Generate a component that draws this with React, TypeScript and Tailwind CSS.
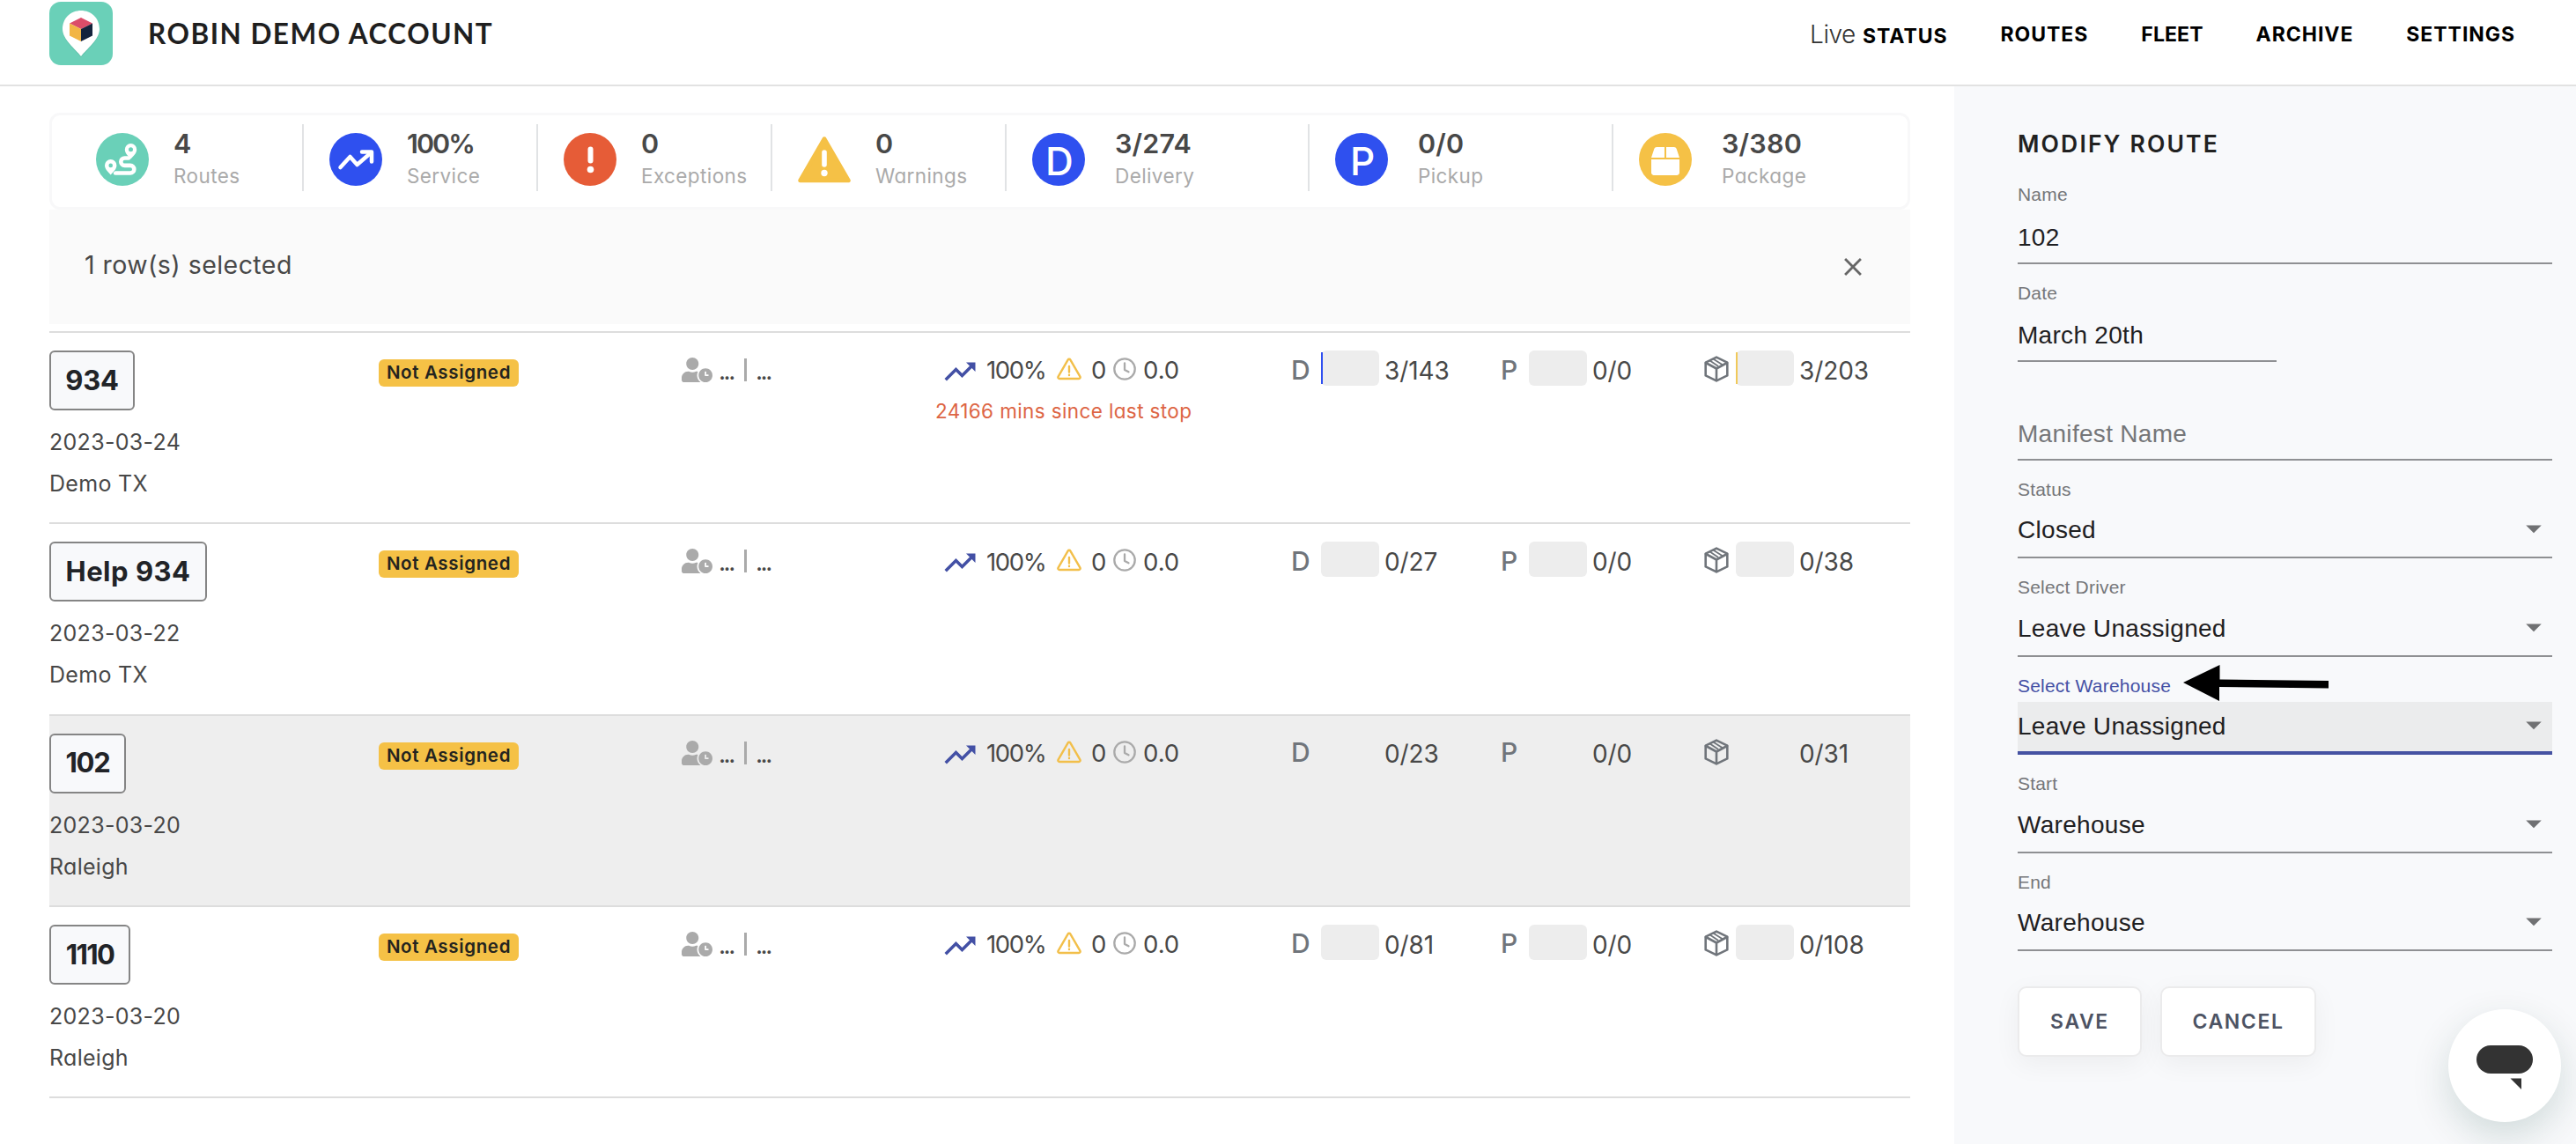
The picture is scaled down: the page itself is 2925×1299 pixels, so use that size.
import { ReactNode } from "react";
import { FaBox, FaUserClock } from "react-icons/fa";
import { MdArrowDropDown, MdClose, MdTrendingUp } from "react-icons/md";

type Route = {
    name: string;
    badge: string;
    date: string;
    depot: string;
    delivery: string;
    pickup: string;
    packages: string;
    selected?: boolean;
    started?: boolean;
    alert?: string;
}

const routes: Route[] = [
    { name: "934", badge: "w-[97px] tracking-[-0.2px]", date: "2023-03-24", depot: "Demo TX", delivery: "3/143", pickup: "0/0", packages: "3/203", started: true, alert: "24166 mins since last stop" },
    { name: "Help 934", badge: "w-[179px] tracking-[0.5px]", date: "2023-03-22", depot: "Demo TX", delivery: "0/27", pickup: "0/0", packages: "0/38" },
    { name: "102", badge: "w-[87px] tracking-[-1.2px]", date: "2023-03-20", depot: "Raleigh", delivery: "0/23", pickup: "0/0", packages: "0/31", selected: true },
    { name: "1110", badge: "w-[92px] tracking-[-1.6px]", date: "2023-03-20", depot: "Raleigh", delivery: "0/81", pickup: "0/0", packages: "0/108" },
];

const Logo = () => (
    <svg className="size-[72px]" viewBox="0 0 72 72">
        <rect width="72" height="72" rx="13" fill="#6ad0b8" />
        <path d="M36 63C30 55 15 44 15 31.500C15 19 24.500 10.500 36 10.500S57 19 57 31.500C57 44 42 55 36 63z" fill="#3f9f89" opacity=".45" />
        <path d="M36 62C30 54 15 43 15 31C15 18.500 24.500 10 36 10S57 18.500 57 31C57 43 42 54 36 62z" fill="#fff" />
        <path d="M36 18l13 6.500-13 6.500-13-6.500z" fill="#db4d69" />
        <path d="M23 24.500L36 31v14l-13-6.500z" fill="#f2b544" />
        <path d="M49 24.500L36 31v14l13-6.500z" fill="#14233c" />
    </svg>
)

const RoutesIcon = () => (
    <svg className="size-[60px]" viewBox="0 0 60 60">
        <path d="M37 28.500h-4.500a4.200 4.200 0 0 0 0 8.400H39a4.300 4.300 0 0 1 0 8.600H22" fill="none" stroke="#fff" strokeWidth="4.600" strokeLinecap="round" />
        <path fillRule="evenodd" fill="#fff" d="M39.500 12a6.700 6.700 0 0 0-6.700 6.700c0 4.300 3.700 7.300 6.700 10.800 3-3.500 6.700-6.500 6.700-10.800A6.700 6.700 0 0 0 39.500 12zm0 4.300a2.500 2.500 0 1 1 0 5 2.500 2.500 0 0 1 0-5z" />
        <path fillRule="evenodd" stroke="#6ad0b8" strokeWidth="1.500" paintOrder="stroke" fill="#fff" d="M16.700 30a6.700 6.700 0 0 0-6.700 6.700c0 4.300 3.700 7.300 6.700 10.800 3-3.500 6.700-6.500 6.700-10.800A6.700 6.700 0 0 0 16.700 30zm0 4.600a2.300 2.300 0 1 1 0 4.600 2.300 2.300 0 0 1 0-4.600z" />
    </svg>
)

const ServiceIcon = () => (
    <svg className="size-[60px]" viewBox="0 0 60 60" fill="none" stroke="#fff" strokeWidth="4.500" strokeLinecap="round" strokeLinejoin="round">
        <path d="M12.500 39l11-12 8 9L46.500 23" />
        <path d="M37 21.500h11v11" />
    </svg>
)

const ExceptionIcon = () => (
    <svg className="size-[60px]" viewBox="0 0 60 60" stroke="#fff" strokeLinecap="round">
        <path d="M30.500 18.500v13" strokeWidth="6" />
        <circle cx="30.500" cy="41.500" r="3.800" fill="#fff" stroke="none" />
    </svg>
)

const WarningIcon = () => (
    <svg className="size-[60px]" viewBox="0 0 60 60">
        <path d="M30 6.500L57.500 54H2.500z" fill="#f5c146" stroke="#f5c146" strokeWidth="4.500" strokeLinejoin="round" />
        <path d="M30 22v14" stroke="#fff" strokeWidth="5.600" strokeLinecap="round" />
        <circle cx="30" cy="45.500" r="3.700" fill="#fff" />
    </svg>
)

// Small outlined triangle used on every row
const RowWarning = () => (
    <svg className="size-7" viewBox="0 0 28 28" fill="none" stroke="#f2bf4a" strokeWidth="2.400" strokeLinecap="round" strokeLinejoin="round">
        <path d="M12.600 3.600L1.600 22.600a1.600 1.600 0 0 0 1.400 2.400h22a1.600 1.600 0 0 0 1.400-2.400l-11-19a1.600 1.600 0 0 0-2.800 0z" />
        <path d="M14 11v6.500M14 20.800v.2" />
    </svg>
)

const RowClock = () => (
    <svg className="size-[26px]" viewBox="0 0 26 26" fill="none" stroke="#aaaaaa" strokeWidth="2.300" strokeLinecap="round" strokeLinejoin="round">
        <circle cx="13" cy="13" r="11.700" />
        <path d="M13 6.500v7.500l4.500 2.300" />
    </svg>
)

const RowBox = () => (
    <svg className="h-[30px] w-7" viewBox="0 0 28 30" fill="none" stroke="#70757b" strokeWidth="2.600" strokeLinecap="round" strokeLinejoin="round">
        <path d="M14 1.600l12.300 6v14.800l-12.300 6-12.300-6V7.600z" />
        <path d="M2 8l12 6.500L26 8M14 14.500v13.500" />
        <path d="M11 4l9.500 6M7 5.800l8.500 5.700" strokeWidth="1.800" />
    </svg>
)

type StatProps = {
    icon: ReactNode;
    color?: string;
    value: string;
    label: string;
    gap?: string;
    tracking?: string;
    first?: boolean;
}
const Stat = ({ icon, color = "", value, label, gap = "gap-7", tracking = "tracking-[0.2px]", first }: StatProps) => (
    <div className={`flex h-[76px] items-center pt-1 pl-[29px] ${gap} ${first ? "" : "border-l-2 border-[#e1e3e5]"}`}>
        <div className={`flex size-[60px] shrink-0 items-center justify-center rounded-full ${color}`}>{icon}</div>
        <div className="leading-9 whitespace-nowrap">
            <div className={`text-[30.500px] font-semibold ${tracking}`}>{value}</div>
            <div className="pt-px text-[22.500px] tracking-[0.400px] text-[#aaaaaa]">{label}</div>
        </div>
    </div>
)

type MeterProps = {
    icon: ReactNode;
    value: string;
    width: string;
    hidden?: boolean;
    fill?: string;
}
const Meter = ({ icon, value, width, hidden, fill = "" }: MeterProps) => (
    <div className={`flex h-10 items-center ${width}`}>
        <div className="flex w-[34px] items-center text-[30px] font-medium text-[#70757b]">{icon}</div>
        <div className={`mr-[6px] mb-1.5 flex h-10 w-[66px] shrink-0 items-center rounded-md ${hidden ? "" : "bg-[#ededed]"}`}>
            <div className={`h-9 w-0.5 ${fill}`}></div>
        </div>
        <span className="text-[28px] tracking-[-0.1px]">{value}</span>
    </div>
)

const RouteRow = ({ route }: { route: Route }) => (
    <div className={`grid h-[217.250px] grid-cols-[374px_344px_288px_404px_1fr] border-b-2 border-[#dddddd] ${route.selected ? "bg-[#eeeeee]" : ""}`}>
        <div className="pt-5">
            <div className={`flex h-[68px] items-center justify-center rounded-md border-2 border-[#858585] bg-[#f8f9fb] text-[31px] font-bold whitespace-nowrap text-[#212327] ${route.badge}`}>
                {route.name}
            </div>
            <div className="mt-[13px] text-[25px] leading-[47px] tracking-[0.300px]">
                <p>{route.date}</p>
                <p>{route.depot}</p>
            </div>
        </div>
        <div className="pt-[30px]">
            <div className="flex h-[31px] w-[159px] items-center justify-center rounded-md bg-[#f5c146] text-[20.500px] font-semibold tracking-[0.650px] whitespace-nowrap text-[#24241f]">Not Assigned</div>
        </div>
        <div className="flex h-[63px] items-center pt-[23px] text-[28px]">
            <FaUserClock className="mb-0.5 h-7 w-[35px] text-[#aaaaaa]" />
            <span className="ml-[7px] w-[29px] tracking-[-2.500px]">...</span>
            <span className="mb-0.5 h-[26px] w-[3px] bg-[#aaaaaa]"></span>
            <span className="ml-[10px] tracking-[-2.500px]">...</span>
        </div>
        <div className="pt-[23px]">
            <div className="flex h-10 items-center text-[27.500px]">
                <MdTrendingUp className="mt-0.5 ml-[7px] size-[42px] text-[#4350a5]" />
                <span className="ml-[9px] w-[80px] tracking-[-1.400px]">100%</span>
                <span className="mb-1 w-[39px]"><RowWarning /></span>
                <span className="w-[25px]">0</span>
                <span className="mb-1 w-[34px]"><RowClock /></span>
                <span>0.0</span>
            </div>
            {route.alert && <p className="mt-[8px] text-[22.500px] leading-9 tracking-[0.380px] text-[#dd6544]">{route.alert}</p>}
        </div>
        <div className="flex pt-[23px]">
            <Meter icon={<span className="mb-0.5">D</span>} value={route.delivery} width="w-[236px]" hidden={route.selected} fill={route.started ? "bg-[#2f4ff0]" : ""} />
            <Meter icon={<span className="mb-0.5 ml-0.5">P</span>} value={route.pickup} width="w-[235px]" hidden={route.selected} />
            <Meter icon={<span className="mb-1 -ml-0.5"><RowBox /></span>} value={route.packages} width="" hidden={route.selected} fill={route.started ? "bg-[#f0c95a]" : ""} />
        </div>
    </div>
)

type FieldProps = {
    label?: string;
    value: string;
    placeholder?: boolean;
    select?: boolean;
    focused?: boolean;
    width?: string;
}
const Field = ({ label, value, placeholder, select, focused, width = "w-[607px]" }: FieldProps) => (
    <div className={`flex h-[111.500px] flex-col ${width}`}>
        <label className={`h-[51.500px] pt-[21px] text-[21px] leading-6 tracking-[0.2px] ${focused ? "text-[#4450a5]" : "text-[#757679]"}`}>{label}</label>
        <div className={`flex h-[60px] items-start justify-between ${focused ? "border-b-4 border-[#4552a2] bg-[#ebeced]" : "border-b-2 border-[#8f9093]"}`}>
            <span className={`text-[28px] leading-8 tracking-[0.300px] ${select ? "pt-3" : "pt-[14px]"} ${placeholder ? "text-[#757679]" : "text-[#1f2022]"}`}>{value}</span>
            {select && <MdArrowDropDown className="mt-[5px] size-[42px] text-[#707173]" />}
        </div>
    </div>
)

const Button = ({ children, width }: { children: ReactNode; width: string }) => (
    <button className={`h-20 rounded-[10px] border-2 border-[#ebebec] bg-white font-[Inter] text-[23px] font-semibold tracking-[1.600px] text-[#4d5363] shadow-[0_8px_30px_rgba(0,0,0,0.05)] ${width}`}>
        {children}
    </button>
)

const App = () => {
    return (
        <div className="relative h-[1299px] w-[2925px] overflow-hidden bg-white font-[Inter,sans-serif] text-[#484848] [font-feature-settings:'cv11']">
            <header className="flex h-[98px] items-start border-b-2 border-[#e2e2e2] pt-0.5 pl-14">
                <Logo />
                <h1 className="ml-[40px] pt-[8px] font-[Lato] text-[31.500px] leading-[56px] font-bold tracking-[1.500px] whitespace-nowrap text-[#1f1f1f]">ROBIN DEMO ACCOUNT</h1>
                <nav className="mr-[69px] ml-auto flex gap-[60px] pt-[19px] text-[23px] leading-9 font-bold tracking-[0.950px] whitespace-nowrap text-black">
                    <span><span className="mr-0.5 text-[28px] font-light tracking-[-0.5px] text-[#333333]">Live</span> STATUS</span>
                    <span>ROUTES</span>
                    <span className="tracking-[0.100px]">FLEET</span>
                    <span>ARCHIVE</span>
                    <span>SETTINGS</span>
                </nav>
            </header>
            <div className="flex h-[1201px]">
                <main className="w-[2219px] pt-[30px] pl-14">
                    <div className="w-[2113px]">
                        <section className="grid h-[110px] grid-cols-[284px_266px_266px_266px_344px_345px_1fr] rounded-[12px] border-3 border-[#f8f8f9] pt-[10px]">
                            <Stat first icon={<RoutesIcon />} color="ml-[21px] bg-[#6ad0b8]" value="4" label="Routes" />
                            <Stat icon={<ServiceIcon />} color="bg-[#2f50ef]" value="100%" label="Service" tracking="tracking-[-2px]" />
                            <Stat icon={<ExceptionIcon />} color="bg-[#e65c37]" value="0" label="Exceptions" />
                            <Stat icon={<WarningIcon />} value="0" label="Warnings" />
                            <Stat icon={<span className="pt-1 pl-0.5 text-[44px] leading-none font-medium text-white">D</span>} color="bg-[#2f50ef]" value="3/274" label="Delivery" gap="gap-[34px]" />
                            <Stat icon={<span className="pt-1 pl-0.5 text-[44px] leading-none font-medium text-white">P</span>} color="bg-[#2f50ef]" value="0/0" label="Pickup" gap="gap-[34px]" />
                            <Stat icon={<FaBox className="mt-1 size-8 text-white" />} color="bg-[#f5c146]" value="3/380" label="Package" gap="gap-[34px]" />
                        </section>
                        <section className="flex h-[130px] items-center justify-between bg-[#fafafa] pr-[48px] pl-10">
                            <p className="mb-1 text-[28.500px] tracking-[0.450px]">1 row(s) selected</p>
                            <MdClose className="size-[34px] text-[#666666]" />
                        </section>
                        <section className="mt-2 border-t-2 border-[#dddddd]">
                            {routes.map((route) => <RouteRow key={route.name} route={route} />)}
                        </section>
                    </div>
                </main>
                <aside className="w-[706px] bg-[#f8f9fb] pt-[47px] pl-[72px]">
                    <h2 className="text-[26.500px] leading-9 font-semibold tracking-[2.150px] text-[#212121]">MODIFY ROUTE</h2>
                    <form className="mt-[7px] font-['Liberation_Sans',sans-serif]">
                        <Field label="Name" value="102" />
                        <Field label="Date" value="March 20th" width="w-[294px]" />
                        <Field value="Manifest Name" placeholder />
                        <Field label="Status" value="Closed" select />
                        <Field label="Select Driver" value="Leave Unassigned" select />
                        <Field label="Select Warehouse" value="Leave Unassigned" select focused />
                        <Field label="Start" value="Warehouse" select />
                        <Field label="End" value="Warehouse" select />
                        <div className="mt-10 flex gap-[21px]">
                            <Button width="w-[141px]">SAVE</Button>
                            <Button width="w-[177px]">CANCEL</Button>
                        </div>
                    </form>
                </aside>
            </div>
            {/* pointer to the warehouse select */}
            <svg className="absolute top-[754px] left-[2479px] h-[43px] w-[166px]" viewBox="0 0 166 43">
                <path d="M0 21L41.500 1v16.500l123.500 1.500v8.500L41 26v16z" fill="#000" />
            </svg>
            <div className="absolute top-[1146px] left-[2780px] flex size-32 items-center justify-center rounded-full bg-white shadow-[0_16px_44px_rgba(0,60,50,0.16)]">
                <svg className="mt-1 h-[52px] w-16" viewBox="0 0 64 52">
                    <rect width="64" height="32" rx="16" fill="#333" y="1" />
                    <path d="M38.500 38.500H51V51z" fill="#333" />
                </svg>
            </div>
        </div>
    )
}
export default App;
